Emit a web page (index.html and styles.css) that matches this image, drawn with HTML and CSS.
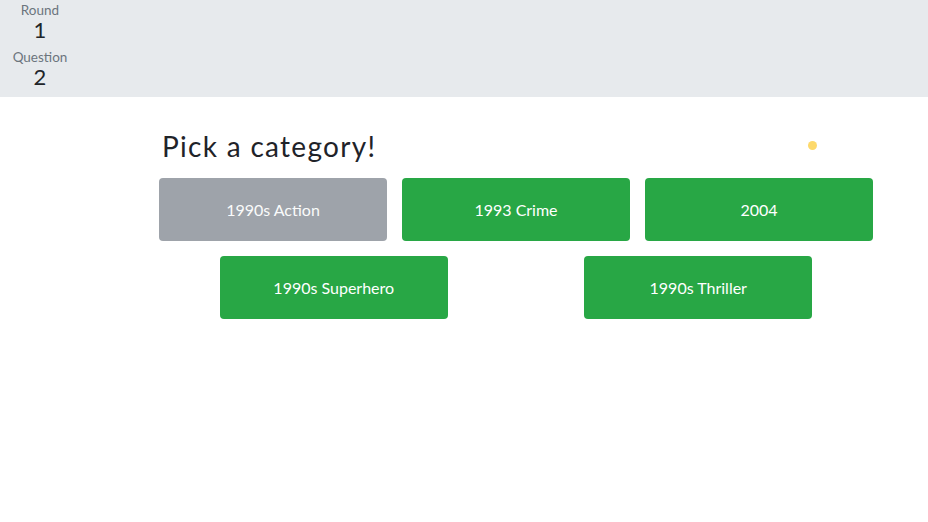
FILE: index.html
```html
<!DOCTYPE html>
<html>
<head>
<meta charset="utf-8">
<link rel="stylesheet" href="styles.css">
</head>
<body>
<header class="top">
  <div class="stats">
    <div class="stat">
      <div class="label">Round</div>
      <div class="value">1</div>
    </div>
    <div class="stat">
      <div class="label">Question</div>
      <div class="value">2</div>
    </div>
  </div>
</header>
<main class="main">
  <div class="title-row">
    <h1 class="title">Pick a category!</h1>
    <span class="dot"></span>
  </div>
  <div class="choices">
    <div class="choice disabled">1990s Action</div>
    <div class="choice">1993 Crime</div>
    <div class="choice">2004</div>
    <div class="choice">1990s Superhero</div>
    <div class="choice">1990s Thriller</div>
  </div>
</main>
</body>
</html>
```
FILE: styles.css
```css
html, body {
  margin: 0;
  padding: 0;
  background: #ffffff;
  font-family: "Lato", "Noto Sans", sans-serif;
  color: #212529;
}
.top {
  background: #e7eaed;
  height: 97px;
  box-sizing: border-box;
  padding-top: 3px;
}
.stats {
  width: 80px;
  display: flex;
  flex-direction: column;
  align-items: center;
  gap: 8px;
}
.stat {
  display: flex;
  flex-direction: column;
  align-items: center;
}
.label {
  font-size: 13.5px;
  color: #6c757d;
  line-height: 15px;
}
.value {
  font-size: 22px;
  line-height: 24px;
  color: #212529;
}
.main {
  padding-top: 29px;
}
.title-row {
  margin-left: 162px;
  width: 655px;
  display: flex;
  align-items: center;
  justify-content: space-between;
  height: 40px;
}
.title {
  margin: 0;
  font-size: 28px;
  font-weight: 400;
  letter-spacing: 1.3px;
  color: #1f2329;
}
.dot {
  width: 9px;
  height: 9px;
  border-radius: 50%;
  background: #fdd96b;
  margin-top: -2px;
}
.choices {
  margin-left: 151.5px;
  width: 729px;
  margin-top: 4.5px;
  display: flex;
  flex-wrap: wrap;
  justify-content: space-around;
}
.choice {
  width: 228px;
  height: 63px;
  margin: 7.5px;
  box-sizing: border-box;
  border-radius: 4px;
  background: #28a745;
  color: #ffffff;
  font-size: 16px;
  display: flex;
  align-items: center;
  justify-content: center;
  padding-bottom: 1px;
}
.choice.disabled {
  background: #9ea3aa;
  color: #fafbfb;
}
```
